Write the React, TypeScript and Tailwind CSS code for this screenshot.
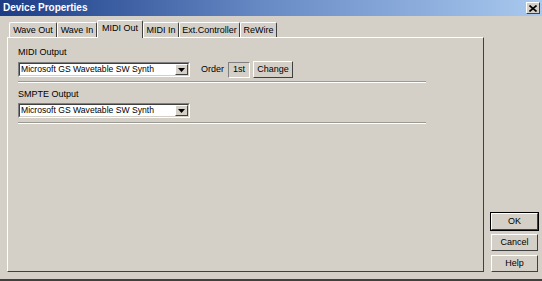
import React from 'react';

const font = { fontFamily: '"Liberation Sans", Arial, sans-serif' };

const tabs = [
  { label: 'Wave Out', w: 'w-[48px]' },
  { label: 'Wave In', w: 'w-[40px]' },
  { label: 'MIDI Out', w: 'w-[46px]', active: true },
  { label: 'MIDI In', w: 'w-[36px]' },
  { label: 'Ext.Controller', w: 'w-[61px]' },
  { label: 'ReWire', w: 'w-[37px]' },
];

function Tab({ label, w, active }: { label: string; w: string; active?: boolean }) {
  return (
    <div
      className={
        'relative flex items-center justify-center rounded-t-[2px] border-t border-l border-r border-t-white border-l-white border-r-[#404040] bg-[#d4d0c8] ' +
        w +
        (active ? ' z-10 h-[18px] -mb-px pb-[2px]' : ' h-[15px]')
      }
    >
      <span className="whitespace-nowrap text-[9px] leading-none text-black">{label}</span>
    </div>
  );
}

function Combo({ text }: { text: string }) {
  return (
    <div className="flex h-[15px] w-[172px] border border-t-[#808080] border-l-[#808080] border-r-white border-b-white">
      <div className="flex flex-1 items-center border border-t-[#404040] border-l-[#404040] border-r-[#d4d0c8] border-b-[#d4d0c8] bg-white pl-[1px]">
        <span className="flex-1 whitespace-nowrap text-[8.6px] leading-none text-black">{text}</span>
        <div className="flex h-full w-[13px] items-center justify-center border border-t-white border-l-white border-r-[#404040] border-b-[#404040] bg-[#d4d0c8]">
          <svg width="7" height="4" viewBox="0 0 7 4">
            <path d="M0 0h7L3.5 4z" fill="#000" />
          </svg>
        </div>
      </div>
    </div>
  );
}

function Etched() {
  return (
    <div className="w-[408px]">
      <div className="h-px bg-[#9a9892]" />
      <div className="h-px bg-white" />
    </div>
  );
}

function Button({ label, def }: { label: string; def?: boolean }) {
  return (
    <div
      className={
        'flex h-[17px] w-[47px] items-center justify-center border border-t-white border-l-white border-r-[#404040] border-b-[#404040] bg-[#d4d0c8] ' +
        (def ? 'outline outline-1 outline-black' : '')
      }
    >
      <span className="text-[9px] leading-none text-black">{label}</span>
    </div>
  );
}

export default function App() {
  return (
    <div className="flex h-[281px] w-[542px] flex-col border-b-2 border-b-[#404040] bg-[#d4d0c8]" style={font}>
      <div className="flex h-[16px] items-center justify-between bg-gradient-to-r from-[#1c3c86] via-[#6a8cc6] to-[#a9c9ee] pl-[3px] pr-[2px]">
        <span className="text-[10px] font-bold leading-none text-white">Device Properties</span>
        <div className="flex h-[12px] w-[14px] items-center justify-center border border-t-white border-l-white border-r-[#404040] border-b-[#404040] bg-[#d4d0c8]">
          <svg width="8" height="7" viewBox="0 0 8 7">
            <path d="M0.5 0.5l7 6M7.5 0.5l-7 6" stroke="#000" strokeWidth="1.6" />
          </svg>
        </div>
      </div>

      <div className="flex flex-1 pl-[7px] pt-[4px]">
        <div className="flex w-[477px] flex-col">
          <div className="flex h-[17px] items-end pl-[2px]">
            {tabs.map((t) => (
              <Tab key={t.label} {...t} />
            ))}
          </div>
          <div className="flex h-[235px] flex-col border border-t-white border-l-white border-r-[#404040] border-b-[#404040] pl-[10px] pt-[10px]">
            <span className="text-[9px] leading-none text-black">MIDI Output</span>
            <div className="mt-[4px] flex items-center">
              <Combo text="Microsoft GS Wavetable SW Synth" />
              <span className="ml-[11px] text-[9px] leading-none text-black">Order</span>
              <div className="ml-[4px] flex h-[16px] w-[22px] items-center justify-center border border-t-[#808080] border-l-[#808080] border-r-white border-b-white">
                <span className="text-[9px] leading-none text-black">1st</span>
              </div>
              <div className="ml-[3px] flex h-[17px] w-[40px] items-center justify-center border border-t-white border-l-white border-r-[#404040] border-b-[#404040]">
                <span className="text-[9px] leading-none text-black">Change</span>
              </div>
            </div>
            <div className="mt-[3px]">
              <Etched />
            </div>
            <span className="mt-[7px] text-[9px] leading-none text-black">SMPTE Output</span>
            <div className="mt-[4px]">
              <Combo text="Microsoft GS Wavetable SW Synth" />
            </div>
            <div className="mt-[4px]">
              <Etched />
            </div>
          </div>
        </div>
        <div className="flex flex-1 flex-col items-center justify-end gap-[4px] pb-[7px] pl-[3px]">
          <Button label="OK" def />
          <Button label="Cancel" />
          <Button label="Help" />
        </div>
      </div>
    </div>
  );
}
